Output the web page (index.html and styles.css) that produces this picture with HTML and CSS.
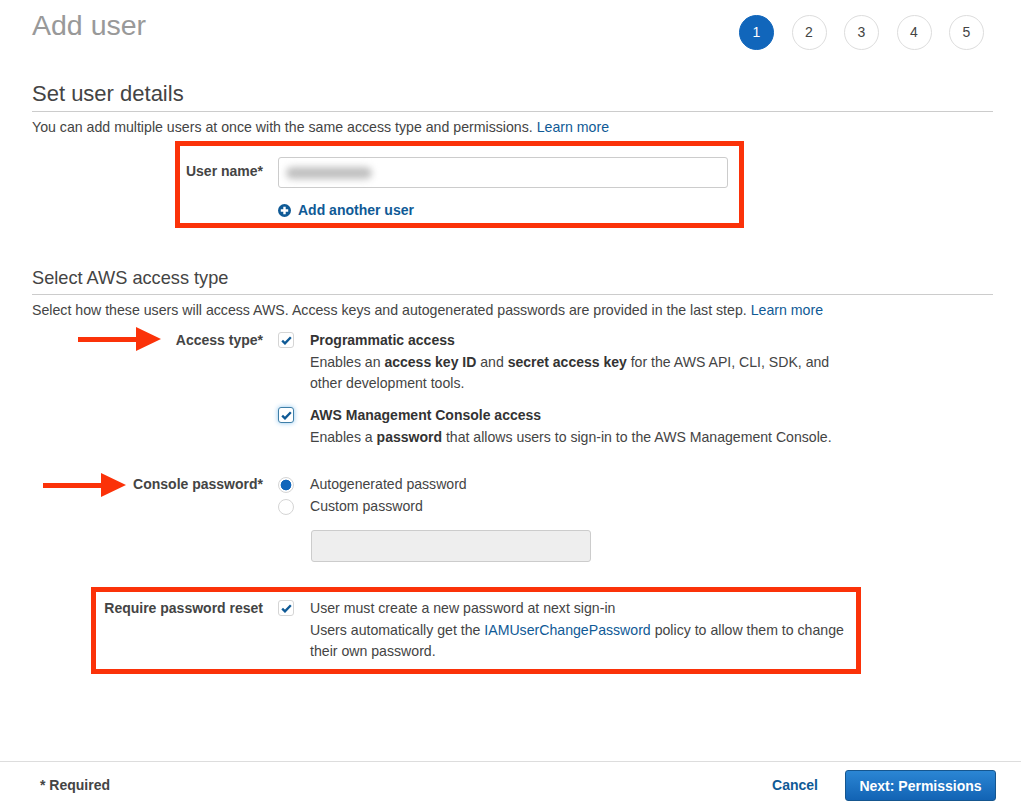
FILE: index.html
```html
<!DOCTYPE html>
<html lang="en">
<head>
<meta charset="utf-8">
<title>Add user</title>
<link rel="stylesheet" href="styles.css">
</head>
<body>
<div class="page">
  <main class="content">
    <header class="top">
      <h1 class="title">Add user</h1>
      <ol class="steps">
        <li class="step step-active">1</li>
        <li class="step">2</li>
        <li class="step">3</li>
        <li class="step">4</li>
        <li class="step">5</li>
      </ol>
    </header>

    <section class="section-details">
      <h2 class="heading heading-lg">Set user details</h2>
      <p class="intro">You can add multiple users at once with the same access type and permissions. <a class="link" href="#">Learn more</a></p>
      <div class="row row-name">
        <div class="label label-name">User name*</div>
        <div class="control">
          <div class="text-input"><span class="redacted"></span></div>
          <a class="add-user" href="#">
            <svg class="plus" viewBox="0 0 14 14" width="13" height="13" aria-hidden="true"><circle cx="7" cy="7" r="7" fill="#0f5a96"/><path d="M7 3v8M3 7h8" stroke="#fff" stroke-width="2.6"/></svg>
            Add another user
          </a>
        </div>
      </div>
    </section>

    <section class="section-access">
      <h2 class="heading heading-md">Select AWS access type</h2>
      <p class="intro">Select how these users will access AWS. Access keys and autogenerated passwords are provided in the last step. <a class="link" href="#">Learn more</a></p>

      <div class="row row-access">
        <div class="label">Access type*</div>
        <div class="control">
          <div class="option">
            <span class="check"><svg viewBox="0 0 12 10" width="11" height="9" aria-hidden="true"><path d="M1.2 5.2 4.3 8.2 10.8 1.4" fill="none" stroke="#0f5a96" stroke-width="2.6"/></svg></span>
            <div class="option-text">
              <strong>Programmatic access</strong><br>
              Enables an <strong>access key ID</strong> and <strong>secret access key</strong> for the AWS API, CLI, SDK, and<br>
              other development tools.
            </div>
          </div>
          <div class="option option-second">
            <span class="check check-focus"><svg viewBox="0 0 12 10" width="11" height="9" aria-hidden="true"><path d="M1.2 5.2 4.3 8.2 10.8 1.4" fill="none" stroke="#0f5a96" stroke-width="2.6"/></svg></span>
            <div class="option-text">
              <strong>AWS Management Console access</strong><br>
              Enables a <strong>password</strong> that allows users to sign-in to the AWS Management Console.
            </div>
          </div>
        </div>
      </div>

      <div class="row row-password">
        <div class="label">Console password*</div>
        <div class="control">
          <div class="option">
            <span class="radio radio-on"></span>
            <div class="option-text">Autogenerated password</div>
          </div>
          <div class="option">
            <span class="radio"></span>
            <div class="option-text">Custom password</div>
          </div>
          <div class="disabled-input"></div>
        </div>
      </div>

      <div class="row row-reset">
        <div class="label">Require password reset</div>
        <div class="control">
          <div class="option">
            <span class="check"><svg viewBox="0 0 12 10" width="11" height="9" aria-hidden="true"><path d="M1.2 5.2 4.3 8.2 10.8 1.4" fill="none" stroke="#0f5a96" stroke-width="2.6"/></svg></span>
            <div class="option-text">
              User must create a new password at next sign-in<br>
              Users automatically get the <a class="link" href="#">IAMUserChangePassword</a> policy to allow them to change<br>
              their own password.
            </div>
          </div>
        </div>
      </div>
    </section>
  </main>

  <footer class="footer">
    <span class="required">* Required</span>
    <div class="actions">
      <a class="cancel" href="#">Cancel</a>
      <button class="next" type="button">Next: Permissions</button>
    </div>
  </footer>

  <div class="callout callout-name"></div>
  <div class="callout callout-reset"></div>
  <svg class="arrow arrow-access" viewBox="0 0 83 25" width="83" height="25" aria-hidden="true"><path d="M0 10h58V0l25 12-25 12V15H0z" fill="#fb3209"/></svg>
  <svg class="arrow arrow-password" viewBox="0 0 83 25" width="83" height="25" aria-hidden="true"><path d="M0 10h58V0l25 12-25 12V15H0z" fill="#fb3209"/></svg>
</div>
</body>
</html>
```

FILE: styles.css
```css
* { box-sizing: border-box; }

html, body { margin: 0; padding: 0; background: #fff; }

body {
  font-family: "Liberation Sans", Arial, sans-serif;
  font-size: 14px;
  line-height: 21px;
  color: #444;
}

.page {
  position: relative;
  width: 1021px;
  height: 806px;
  display: flex;
  flex-direction: column;
  overflow: hidden;
}

.content { flex: 1; padding: 0 28px 0 32px; }

.top {
  display: flex;
  justify-content: space-between;
  align-items: flex-start;
  height: 76px;
  padding-right: 9px;
}

.title {
  margin: 8px 0 0;
  font-size: 28.5px;
  line-height: 34px;
  font-weight: 400;
  color: #999;
}

.steps {
  display: flex;
  gap: 17.5px;
  margin: 15px 0 0;
  padding: 0;
  list-style: none;
}

.step {
  width: 35px;
  height: 35px;
  border: 1px solid #ddd;
  border-radius: 50%;
  display: flex;
  align-items: center;
  justify-content: center;
  font-size: 14px;
  color: #444;
}

.step-active { background: #1166bb; border-color: #1166bb; color: #fff; }

.heading {
  margin: 0;
  font-weight: 400;
  color: #444;
  border-bottom: 1px solid #ccc;
}

.heading-lg { font-size: 22px; line-height: 24px; padding-bottom: 5px; margin-top: 6px; }
.heading-md { font-size: 18.2px; line-height: 22px; padding-bottom: 5px; }

.intro { margin: 5px 0 0; font-size: 14.17px; }

.link, .add-user, .cancel { color: #0f5a96; text-decoration: none; }

.row {
  display: grid;
  grid-template-columns: 231px 1fr;
  column-gap: 15px;
}

.label { text-align: right; font-weight: 700; color: #444; }

.row-name { margin-top: 19px; }
.label-name { padding-top: 4px; }

.section-access { margin-top: 46px; }

.text-input {
  width: 450px;
  height: 31px;
  border: 1px solid #ccc;
  border-radius: 3px;
  display: flex;
  align-items: center;
  padding-left: 7px;
}

.redacted {
  width: 86px;
  height: 12px;
  border-radius: 6px;
  background: #c0c0c0;
  filter: blur(3.5px);
}

.add-user {
  display: flex;
  align-items: center;
  gap: 7px;
  margin-top: 12px;
  font-weight: 700;
}

.plus { flex: none; }

.row-access { margin-top: 9px; }
.row-password { margin-top: 26px; }
.row-reset { margin-top: 36px; }

.option { display: flex; align-items: flex-start; gap: 16px; }
.option-second { margin-top: 10.5px; }
.option-text { color: #444; font-size: 14.1px; line-height: 21.5px; }
.option-text strong { color: #333; font-size: 14px; }
.row-reset .option-text { font-size: 14.14px; }

.check {
  flex: none;
  width: 16px;
  height: 16px;
  margin-top: 2px;
  border: 1px solid #d5d5d5;
  border-radius: 3px;
  display: flex;
  align-items: center;
  justify-content: center;
  background: #fff;
}

.check-focus {
  border-color: #3f7fa8;
  box-shadow: 0 0 5px #8cc4ee;
}

.radio {
  flex: none;
  width: 16px;
  height: 16px;
  margin-top: 3px;
  border: 1px solid #d5d5d5;
  border-radius: 50%;
  background: #fff;
}

.radio-on {
  background: radial-gradient(circle, #1166bb 0, #1166bb 5px, #fff 5.7px);
}

.disabled-input {
  width: 280px;
  height: 32px;
  margin: 13px 0 0 33px;
  background: #eee;
  border: 1px solid #ccc;
  border-radius: 3px;
}

.footer {
  height: 45px;
  border-top: 1px solid #ddd;
  display: flex;
  justify-content: space-between;
  align-items: center;
  padding: 3px 25px 0 40px;
}

.required { font-weight: 700; }

.actions { display: flex; align-items: center; gap: 27px; }

.cancel { font-weight: 700; }

.next {
  width: 151px;
  height: 31px;
  border: 1px solid #15568f;
  border-radius: 3px;
  background: linear-gradient(#2b86d4, #1263b4);
  color: #fff;
  font: 700 14px "Liberation Sans", Arial, sans-serif;
  padding: 0;
}

.callout {
  position: absolute;
  border: 5px solid #fb3209;
  pointer-events: none;
}

.callout-name { left: 175px; top: 141px; width: 569px; height: 87px; }
.callout-reset { left: 91px; top: 587px; width: 770px; height: 87px; }

.arrow { position: absolute; }
.arrow-access { left: 78px; top: 327px; }
.arrow-password { left: 43px; top: 473px; }
```
